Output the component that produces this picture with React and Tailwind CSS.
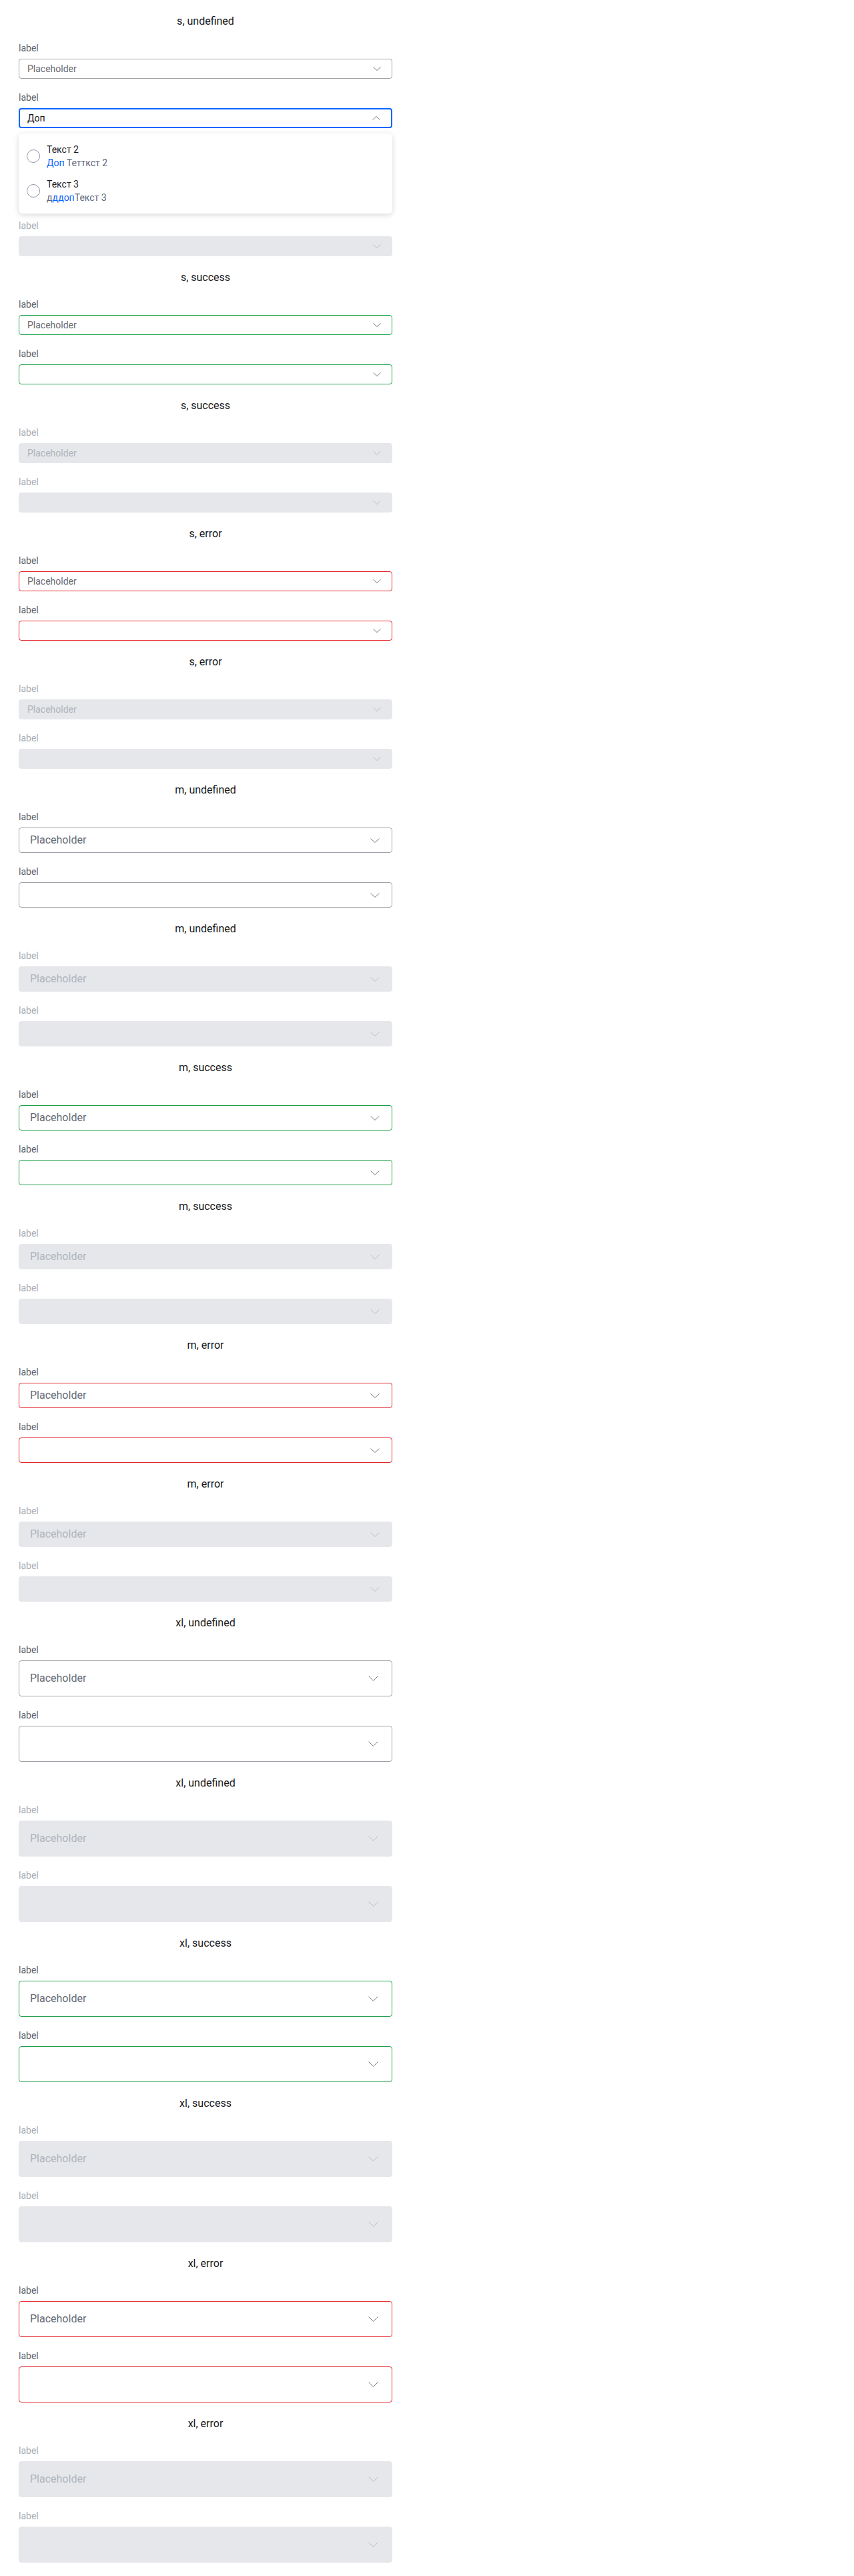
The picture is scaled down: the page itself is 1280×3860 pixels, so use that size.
import React from "react";

const FONT = "font-['Roboto',sans-serif]";

// size variants of the select
const SIZES = {
  s: { box: "h-[30px] pl-3 pr-4 text-sm", icon: "w-3 h-1.5" },
  m: { box: "h-[38px] pl-4 pr-[18px] text-base", icon: "w-[14px] h-[7px]" },
  xl: { box: "h-[54px] pl-4 pr-5 text-base", icon: "w-[15px] h-2" },
};

const BORDERS = {
  undefined: "border border-[#9ea2a8]",
  success: "border border-[#1fa04a]",
  error: "border border-[#e3262b]",
};

const Chevron = ({ className, up }) => (
  <svg viewBox="0 0 12 6" fill="none" className={className} preserveAspectRatio="none">
    <path
      d={up ? "M0.5 5.5 L6 0.5 L11.5 5.5" : "M0.5 0.5 L6 5.5 L11.5 0.5"}
      stroke="currentColor"
      strokeWidth="1"
      vectorEffect="non-scaling-stroke"
    />
  </svg>
);

const Option = ({ title, hint }) => (
  <div className="flex items-center gap-2.5 px-3 py-1.5">
    <span className="w-5 h-5 rounded-full border border-[#8d97a8] shrink-0" />
    <div className="text-sm leading-5">
      <div className="text-[#1d2023]">{title}</div>
      <div className="text-[#5b677c]">{hint}</div>
    </div>
  </div>
);

const Field = ({ size, status, disabled, placeholder, value, open }) => {
  const sz = SIZES[size];
  let box = "bg-white " + BORDERS[status];
  if (disabled) box = "bg-[#e5e7eb] border border-[#e5e7eb]";
  if (open) box = "bg-white border-2 border-[#0866ff] pl-[11px]";

  return (
    <div className="flex flex-col gap-2">
      <span className={"text-sm leading-4 " + (disabled ? "text-[#a9adb3]" : "text-[#5f636a]")}>label</span>
      <div className="relative">
        <div className={"flex items-center justify-between rounded " + sz.box + " " + box}>
          <span className={value ? "text-[#141619]" : disabled ? "text-[#b1b5bb]" : "text-[#676b72]"}>
            {value || placeholder}
          </span>
          <Chevron up={open} className={sz.icon + " " + (disabled ? "text-[#b9bdc3]" : "text-[#74787e]")} />
        </div>

        {open && (
          <div className="absolute left-0 right-0 top-full mt-2 z-10 bg-white rounded-md py-2 shadow-[0_2px_8px_rgba(0,0,0,0.16)]">
            <Option
              title="Текст 2"
              hint={
                <>
                  <span className="text-[#0866ff]">Доп</span> {"Теттк" + "ст"} 2
                </>
              }
            />
            <Option
              title="Текст 3"
              hint={
                <>
                  д<span className="text-[#0866ff]">ддоп</span>Текст 3
                </>
              }
            />
          </div>
        )}
      </div>
    </div>
  );
};

const Section = ({ size, status, disabled, first }) => (
  <div className="flex flex-col gap-5">
    <h2 className="text-base leading-6 text-center text-[#16181b]">
      {size}, {status}
    </h2>
    <Field size={size} status={status} disabled={disabled} placeholder="Placeholder" />
    {first ? (
      <Field size={size} status={status} value="Доп" open />
    ) : (
      <Field size={size} status={status} disabled={disabled} />
    )}
  </div>
);

export default function App() {
  const sections = [];
  ["s", "m", "xl"].forEach((size) => {
    ["undefined", "success", "error"].forEach((status) => {
      sections.push({ size, status, disabled: false });
      sections.push({ size, status, disabled: true });
    });
  });

  return (
    <div className={"bg-white min-h-screen pt-5 pb-5 pl-7 " + FONT}>
      <div className="w-[560px] flex flex-col gap-5">
        {sections.map((s, i) => (
          <Section key={i} {...s} first={i === 0} />
        ))}
      </div>
    </div>
  );
}
